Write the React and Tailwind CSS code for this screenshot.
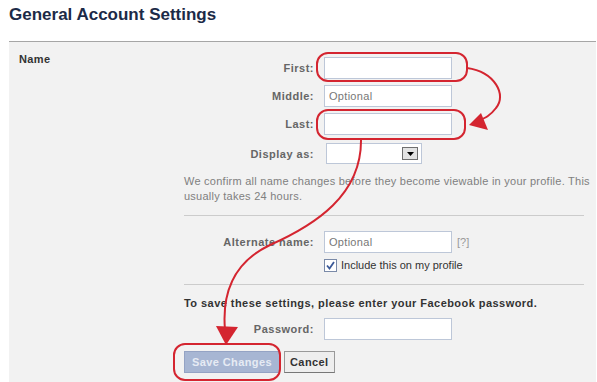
import React from "react";

function Field({ label, children, className = "" }) {
  return (
    <div className={"flex items-center " + className}>
      <div className="w-[140px] text-right text-[11px] font-bold text-[#666] pr-[10px] leading-[14px] tracking-[0.5px]">{label}</div>
      {children}
    </div>
  );
}

function TextBox({ placeholder }) {
  return (
    <div className="w-[128px] h-[22px] border border-[#bdc7d8] bg-white flex items-center pl-[4px] text-[11px] text-[#777] tracking-[0.3px]">
      {placeholder}
    </div>
  );
}

export default function App() {
  return (
    <div className="relative w-[597px] h-[382px] bg-white overflow-hidden font-['Liberation_Sans',Arial,sans-serif]">
      <h1 className="h-[41px] pl-[9px] pt-[4px] text-[17px] leading-[22px] font-bold text-[#1c2a47]">
        General Account Settings
      </h1>
      <div className="ml-[9px] mr-[1px] h-[341px] border-t border-[#a6a6a6] bg-[#f2f2f2] flex">
        <div className="w-[175px] pl-[10px] pt-[10px] text-[11px] leading-[14px] font-bold text-[#333] tracking-[0.4px]">Name</div>
        <div className="w-[410px] pt-[15px] flex flex-col">
          <Field label="First:"><TextBox /></Field>
          <Field label="Middle:" className="mt-[6px]"><TextBox placeholder="Optional" /></Field>
          <Field label="Last:" className="mt-[6px]"><TextBox /></Field>
          <Field label="Display as:" className="mt-[8px]">
            <div className="ml-[2px] w-[96px] h-[21px] border border-[#bdc7d8] bg-white flex items-center justify-end pr-[3px]">
              <div className="w-[16px] h-[13px] border border-[#6f6f6f] bg-[#e3e3e3] flex items-center justify-center">
                <svg width="7" height="4" viewBox="0 0 7 4"><path d="M0 0h7L3.5 4z" fill="#000" /></svg>
              </div>
            </div>
          </Field>
          <p className="mt-[10px] text-[11px] leading-[15px] text-[#808080] tracking-[0.25px]">
            We confirm all name changes before they become viewable in your profile. This usually takes 24 hours.
          </p>
          <div className="mt-[11px] w-[400px] border-t border-[#cccccc]" />
          <Field label="Alternate name:" className="mt-[15px]">
            <TextBox placeholder="Optional" />
            <span className="ml-[5px] text-[11px] text-[#999]">[?]</span>
          </Field>
          <div className="mt-[5px] ml-[140px] flex items-center">
            <div className="w-[13px] h-[13px] border border-[#7a8aa8] bg-white flex items-center justify-center">
              <svg width="9" height="9" viewBox="0 0 9 9">
                <path d="M1 4.5L3.5 7.5L8 1" stroke="#3b5998" strokeWidth="1.8" fill="none" />
              </svg>
            </div>
            <span className="ml-[4px] text-[11px] leading-[14px] text-[#333]">Include this on my profile</span>
          </div>
          <div className="mt-[12px] w-[400px] border-t border-[#cccccc]" />
          <p className="mt-[11px] text-[11px] leading-[14px] font-bold text-[#333] tracking-[0.45px]">
            To save these settings, please enter your Facebook password.
          </p>
          <Field label="Password:" className="mt-[8px]"><TextBox /></Field>
          <div className="mt-[11px] flex gap-[4px]">
            <div className="h-[22px] px-[7px] flex items-center bg-[#a7b6d3] border border-[#94a3c4] text-[11px] font-bold text-[#e6ebf4] tracking-[0.4px]">
              Save Changes
            </div>
            <div className="h-[22px] px-[5px] flex items-center bg-[#eeeeee] border border-[#999] border-b-[#777] text-[11px] font-bold text-[#333] tracking-[0.4px]">
              Cancel
            </div>
          </div>
        </div>
      </div>

      <svg className="absolute inset-0 pointer-events-none" width="597" height="382" viewBox="0 0 597 382">
        <g stroke="#d42530" strokeWidth="2" fill="none">
          <rect x="317" y="53" width="150" height="28" rx="11" />
          <rect x="317" y="110" width="148" height="29" rx="11" />
          <rect x="174" y="344" width="106" height="36" rx="11" />
          <path d="M467 68 C 495 72, 507 95, 496 108 C 490 116, 485 118, 478 121" />
          <path d="M361 139 C 362 195, 315 225, 270 245 C 232 263, 222 295, 225 330" />
        </g>
        <path d="M469 125 L481 113 L488 130 Z" fill="#d42530" />
        <path d="M226 345 L216 326 L238 327 Z" fill="#d42530" />
      </svg>
    </div>
  );
}
